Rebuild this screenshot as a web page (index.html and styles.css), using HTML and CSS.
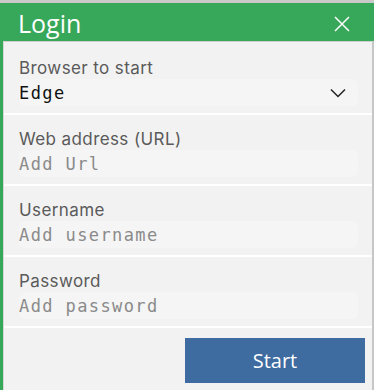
FILE: index.html
```html
<!DOCTYPE html>
<html lang="en">
<head>
    <meta charset="UTF-8">
    <meta name="viewport" content="width=device-width, initial-scale=1.0">
    <title>Login</title>
    <link rel="stylesheet" href="styles.css">
</head>
<body>
    <div class="topbar"></div>
    <div class="header">
        <h1>Login</h1>
        <button class="close-button" aria-label="Close">
            <svg width="16" height="16" viewBox="0 0 16 16">
                <path d="M1 1 L15 15 M15 1 L1 15" stroke="#fff" stroke-width="1.5" fill="none"/>
            </svg>
        </button>
    </div>

    <div class="panel">
        <div class="field first">
            <div class="field-label">Browser to start</div>
            <div class="input-row select">
                <span class="value">Edge</span>
                <svg width="16" height="10" viewBox="0 0 16 10">
                    <path d="M1 1.5 L8 8.5 L15 1.5" stroke="#222" stroke-width="1.5" fill="none"/>
                </svg>
            </div>
        </div>
        <div class="field">
            <div class="field-label">Web address (URL)</div>
            <div class="input-row"><span class="placeholder">Add Url</span></div>
        </div>
        <div class="field">
            <div class="field-label">Username</div>
            <div class="input-row"><span class="placeholder">Add username</span></div>
        </div>
        <div class="field">
            <div class="field-label">Password</div>
            <div class="input-row"><span class="placeholder">Add password</span></div>
        </div>
        <div class="actions">
            <button class="start-button">Start</button>
        </div>
    </div>
</body>
</html>
```

FILE: styles.css
```css
body {
    margin: 0;
    padding: 0;
    background-color: #37a85a;
    font-family: Inter, "Noto Sans", sans-serif;
    height: 390px;
    display: flex;
    flex-direction: column;
    overflow: hidden;
}
.topbar {
    height: 3px;
    background-color: #c9c9c9;
}
.header {
    height: 38px;
    display: flex;
    align-items: center;
    justify-content: space-between;
    padding: 3px 24px 0 18px;
    box-sizing: border-box;
}
.header h1 {
    margin: 0;
    font-family: "Open Sans", sans-serif;
    font-weight: normal;
    font-size: 25px;
    color: white;
    line-height: 1;
}
.close-button {
    background: none;
    border: none;
    padding: 0;
    display: flex;
    cursor: pointer;
}
.panel {
    flex: 1;
    margin-left: 3px;
    background-color: #f2f2f2;
    border-top: 1px solid #d0d0d0;
    border-left: 1px solid #d6d6d6;
    border-right: 2px solid #c6c6c6;
}
.field {
    height: 71px;
    padding: 14px 14px 0 15px;
    box-sizing: border-box;
    border-bottom: 2px solid #ffffff;
}
.field.first {
    height: 73px;
    padding-top: 16px;
}
.field-label {
    font-size: 17px;
    letter-spacing: 0.4px;
    line-height: 20px;
    color: #5a5a5a;
}
.input-row {
    height: 27px;
    margin-top: 1px;
    display: flex;
    align-items: center;
    justify-content: space-between;
    padding: 0 12px 0 0;
    background-color: #f5f5f5;
    border-radius: 6px;
    font-family: "DejaVu Sans Mono", monospace;
    font-size: 17px;
    letter-spacing: 1.4px;
}
.value {
    color: #111;
}
.placeholder {
    color: #8a8a8a;
}
.actions {
    display: flex;
    justify-content: flex-end;
    padding: 10px 7px 0 0;
}
.start-button {
    width: 180px;
    height: 45px;
    background-color: #3e6ba0;
    color: white;
    border: none;
    font-family: "Open Sans", sans-serif;
    font-size: 20px;
    cursor: pointer;
}
```
